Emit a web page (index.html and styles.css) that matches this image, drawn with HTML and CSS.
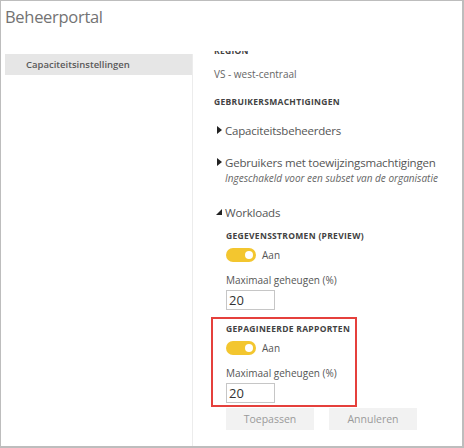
FILE: index.html
```html
<!DOCTYPE html>
<html>
<head>
<meta charset="utf-8">
<link rel="stylesheet" href="styles.css">
</head>
<body>
<div class="frame">
  <div class="title">Beheerportal</div>
  <div class="body">
    <nav class="sidebar">
      <div class="nav-item">Capaciteitsinstellingen</div>
    </nav>
    <main class="main">
      <div class="content">
        <div class="label region">REGION</div>
        <div class="value">VS - west-centraal</div>
        <div class="label perms">GEBRUIKERSMACHTIGINGEN</div>
        <div class="expander first">
          <svg class="tri" width="5" height="8" viewBox="0 0 5 8"><path d="M0 0 L5 4 L0 8 Z" fill="#222"/></svg>
          <span>Capaciteitsbeheerders</span>
        </div>
        <div class="expander second">
          <svg class="tri" width="5" height="8" viewBox="0 0 5 8"><path d="M0 0 L5 4 L0 8 Z" fill="#222"/></svg>
          <span>Gebruikers met toewijzingsmachtigingen</span>
        </div>
        <div class="note">Ingeschakeld voor een subset van de organisatie</div>
        <div class="expander workloads">
          <svg class="tri open" width="6" height="6" viewBox="0 0 6 6"><path d="M6 0 L6 6 L0 6 Z" fill="#222"/></svg>
          <span>Workloads</span>
        </div>
        <div class="workload">
          <div class="label wl-title">GEGEVENSSTROMEN (PREVIEW)</div>
          <div class="toggle-row"><span class="toggle"><span class="knob"></span></span><span class="toggle-text">Aan</span></div>
          <div class="field-label">Maximaal geheugen (%)</div>
          <div class="input">20</div>
        </div>
        <div class="workload highlight">
          <div class="label wl-title">GEPAGINEERDE RAPPORTEN</div>
          <div class="toggle-row"><span class="toggle"><span class="knob"></span></span><span class="toggle-text">Aan</span></div>
          <div class="field-label">Maximaal geheugen (%)</div>
          <div class="input">20</div>
        </div>
        <div class="buttons">
          <div class="btn">Toepassen</div>
          <div class="btn">Annuleren</div>
        </div>
      </div>
    </main>
  </div>
</div>
</body>
</html>
```

FILE: styles.css
```css
html, body {
  margin: 0;
  padding: 0;
  background: #fff;
}
.frame {
  box-sizing: border-box;
  width: 464px;
  height: 448px;
  border-top: 1px solid #bdbdbd;
  border-left: 1px solid #bdbdbd;
  border-right: 2px solid #bdbdbd;
  border-bottom: 2px solid #bdbdbd;
  font-family: "Open Sans", "Noto Sans", sans-serif;
  color: #555;
  overflow: hidden;
  display: flex;
  flex-direction: column;
}
.title {
  height: 44px;
  padding-left: 4px;
  font-size: 16.5px;
  letter-spacing: -0.3px;
  line-height: 32px;
  color: #737373;
}
.body {
  flex: 1;
  display: flex;
  min-height: 0;
}
.sidebar {
  width: 187px;
  margin-left: 4px;
  margin-top: 9px;
  border-right: 1px solid #ececec;
}
.nav-item {
  height: 21px;
  line-height: 21px;
  background: #e6e6e6;
  font-size: 9.5px;
  font-weight: 600;
  color: #5a5a5a;
  padding-left: 21px;
}
.main {
  flex: 1;
  margin-top: 6px;
  overflow: hidden;
  padding-left: 21px;
}
.content {
  margin-top: -6px;
}
.label {
  font-size: 8.5px;
  font-weight: 700;
  color: #424242;
  letter-spacing: 0.3px;
  line-height: 12px;
}
.value {
  margin-top: 10px;
  font-size: 10px;
  line-height: 14px;
  color: #666;
}
.perms {
  margin-top: 15px;
}
.expander {
  display: flex;
  align-items: center;
  height: 18px;
  font-size: 11.5px;
  letter-spacing: -0.2px;
  color: #555;
  white-space: nowrap;
}
.expander .tri {
  width: 11px;
  flex: none;
}
.expander .tri.open {
  margin-left: -1px;
  width: 12px;
}
.first { margin-top: 13px; }
.second { margin-top: 14px; }
.workloads { margin-top: 18px; }
.note {
  margin-left: 11px;
  font-size: 10px;
  font-style: italic;
  color: #666;
  line-height: 14px;
  white-space: nowrap;
}
.workload {
  margin-left: 12px;
}
.workload .wl-title {
  margin-top: 9px;
}
.toggle-row {
  display: flex;
  align-items: center;
  height: 14px;
  margin-top: 6px;
}
.toggle {
  box-sizing: border-box;
  width: 30px;
  height: 14px;
  border-radius: 7px;
  background: #f3c62f;
  display: flex;
  justify-content: flex-end;
  align-items: center;
  padding-right: 3px;
}
.knob {
  width: 8px;
  height: 8px;
  border-radius: 50%;
  background: #fff;
}
.toggle-text {
  margin-left: 6px;
  font-size: 10px;
  color: #555;
}
.field-label {
  margin-top: 11px;
  font-size: 10px;
  line-height: 14px;
  color: #555;
}
.input {
  box-sizing: border-box;
  margin-top: 3px;
  width: 49px;
  height: 20px;
  border: 1px solid #c6c6c6;
  font-size: 13px;
  line-height: 18px;
  padding-left: 2px;
  color: #333;
}
.highlight {
  box-sizing: border-box;
  margin-top: 7px;
  margin-left: -3px;
  width: 146px;
  border: 2px solid #e5403c;
  padding: 4px 0 2px 13px;
}
.highlight .wl-title {
  margin-top: 0;
}
.buttons {
  display: flex;
  gap: 15px;
  margin-top: 1px;
  margin-left: 12px;
}
.btn {
  width: 88px;
  height: 22px;
  line-height: 22px;
  text-align: center;
  background: #f2f2f2;
  font-size: 10.5px;
  color: #9a9a9a;
}
```
